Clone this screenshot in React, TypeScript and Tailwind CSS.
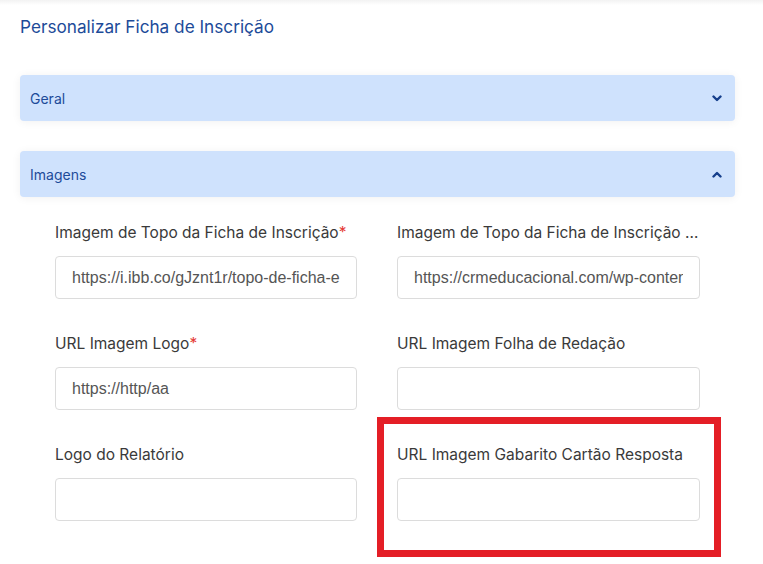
import * as React from "react";

type Field = { label: string; value?: string; required?: boolean };

const fields: Field[] = [
  { label: "Imagem de Topo da Ficha de Inscrição", value: "https://i.ibb.co/gJznt1r/topo-de-ficha-e", required: true },
  { label: "Imagem de Topo da Ficha de Inscrição Mobile", value: "https://crmeducacional.com/wp-content/uploads" },
  { label: "URL Imagem Logo", value: "https://http/aa", required: true },
  { label: "URL Imagem Folha de Redação" },
  { label: "Logo do Relatório" },
  { label: "URL Imagem Gabarito Cartão Resposta" },
];

function Chevron({ up }: { up?: boolean }) {
  return (
    <svg width="10" height="7" viewBox="0 0 10 7" className={up ? "rotate-180" : ""}>
      <path d="M1.5 1.5 L5 5 L8.5 1.5" fill="none" stroke="#163f8c" strokeWidth="2.4" strokeLinecap="round" strokeLinejoin="round" />
    </svg>
  );
}

function AccordionHeader({ title, open }: { title: string; open?: boolean }) {
  return (
    <div className="ml-[20px] flex h-[46px] w-[715px] items-center justify-between rounded-[4px] bg-[#cfe2fd] pl-[10px] pr-[13px] shadow-[0_1px_10px_rgba(0,0,0,0.06)]">
      <span className="text-[14px] text-[#1d4b99]">{title}</span>
      <Chevron up={open} />
    </div>
  );
}

function FormField({ field }: { field: Field }) {
  return (
    <div className="min-w-0">
      <div className="h-[20px] truncate text-[15.5px] leading-[20px] text-[#3a3a3a]">
        {field.label}
        {field.required && <span className="text-[#e53935]">*</span>}
      </div>
      <div className="mt-[13px] flex h-[43px] items-center rounded-[4px] border border-[#dcdcdc] bg-white px-[16px]">
        <div className="min-w-0 flex-1 overflow-hidden whitespace-nowrap font-['Liberation_Sans',Arial,sans-serif] text-[16px] text-[#555]">
          {field.value}
        </div>
      </div>
    </div>
  );
}

export default function App() {
  return (
    <div className="relative h-[564px] w-[763px] overflow-hidden bg-white font-['Inter',sans-serif]">
      <div className="h-[5px] bg-gradient-to-b from-[#f2f2f2] to-white" />
      <h1 className="pl-[20px] pt-[12px] text-[17.2px] leading-[20px] text-[#1d4b99]">
        Personalizar Ficha de Inscrição
      </h1>

      <div className="mt-[38px]">
        <AccordionHeader title="Geral" />
      </div>
      <div className="mt-[30px]">
        <AccordionHeader title="Imagens" open />
      </div>

      <div className="ml-[55px] mt-[26px] grid grid-cols-[302px_303px] gap-x-[40px] gap-y-[35px]">
        {fields.map((f) => (
          <FormField key={f.label} field={f} />
        ))}
      </div>

      {/* highlight annotation */}
      <div className="absolute left-[377px] top-[417px] h-[140px] w-[344px] border-[7px] border-[#e41e26]" />
    </div>
  );
}
